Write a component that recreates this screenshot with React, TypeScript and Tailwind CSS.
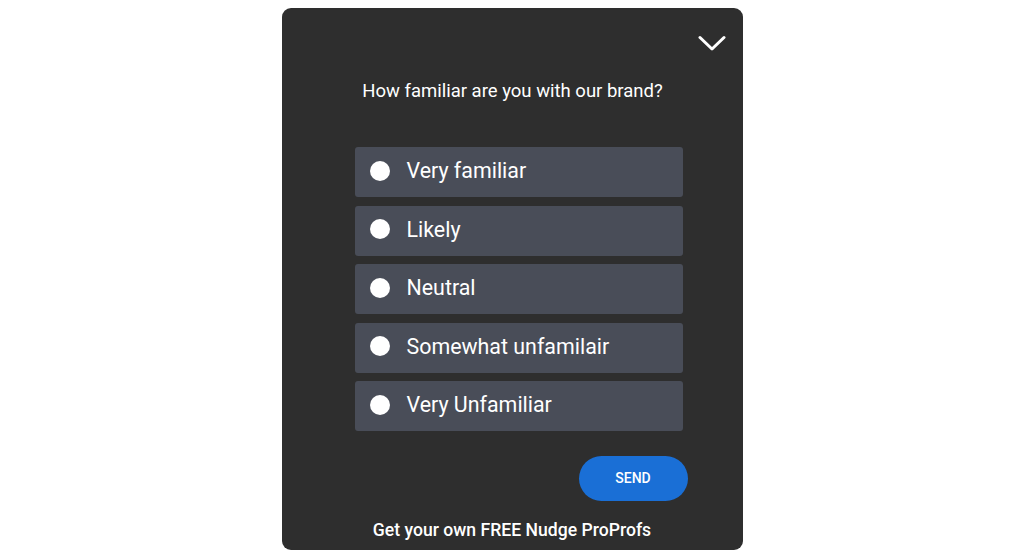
import React from "react";

const options = [
  "Very familiar",
  "Likely",
  "Neutral",
  "Somewhat unfamilair",
  "Very Unfamiliar",
];

const ChevronDown = () => (
  <svg width="28" height="17" viewBox="0 0 28 17" fill="none">
    <path d="M2 2.5 L14 14 L26 2.5" stroke="white" strokeWidth="3" strokeLinecap="round" strokeLinejoin="round" />
  </svg>
);

export default function App() {
  return (
    <div className="w-full h-[558px] bg-white flex justify-center pt-[8px] font-['Roboto',sans-serif]">
      <div className="w-[461px] h-[542px] bg-[#2e2e2e] rounded-[9px] flex flex-col">
        <div className="flex justify-end pt-[27px] pr-[17px]">
          <ChevronDown />
        </div>
        <p className="mt-[27px] text-center text-white text-[18.5px] leading-[24px] pl-[1px]">
          How familiar are you with our brand?
        </p>
        <div className="mt-[44px] ml-[73px] w-[328px] flex flex-col gap-[8.5px]">
          {options.map((opt) => (
            <div
              key={opt}
              className="h-[50px] rounded-[3px] bg-[#494d58] flex items-center pl-[15px]"
            >
              <span className="w-[20px] h-[20px] rounded-full bg-white shrink-0 -mt-[3px]" />
              <span className="ml-[17px] text-white text-[21.4px] leading-none -mt-[2px]">
                {opt}
              </span>
            </div>
          ))}
        </div>
        <div className="flex justify-end pr-[55px] mt-[25px]">
          <button className="w-[109px] h-[45px] rounded-full bg-[#1a6fd6] text-white text-[14px] font-medium">
            SEND
          </button>
        </div>
        <p className="mt-[17px] text-center text-white text-[17.6px] font-medium leading-[24px]">
          Get your own FREE Nudge ProProfs
        </p>
      </div>
    </div>
  );
}
